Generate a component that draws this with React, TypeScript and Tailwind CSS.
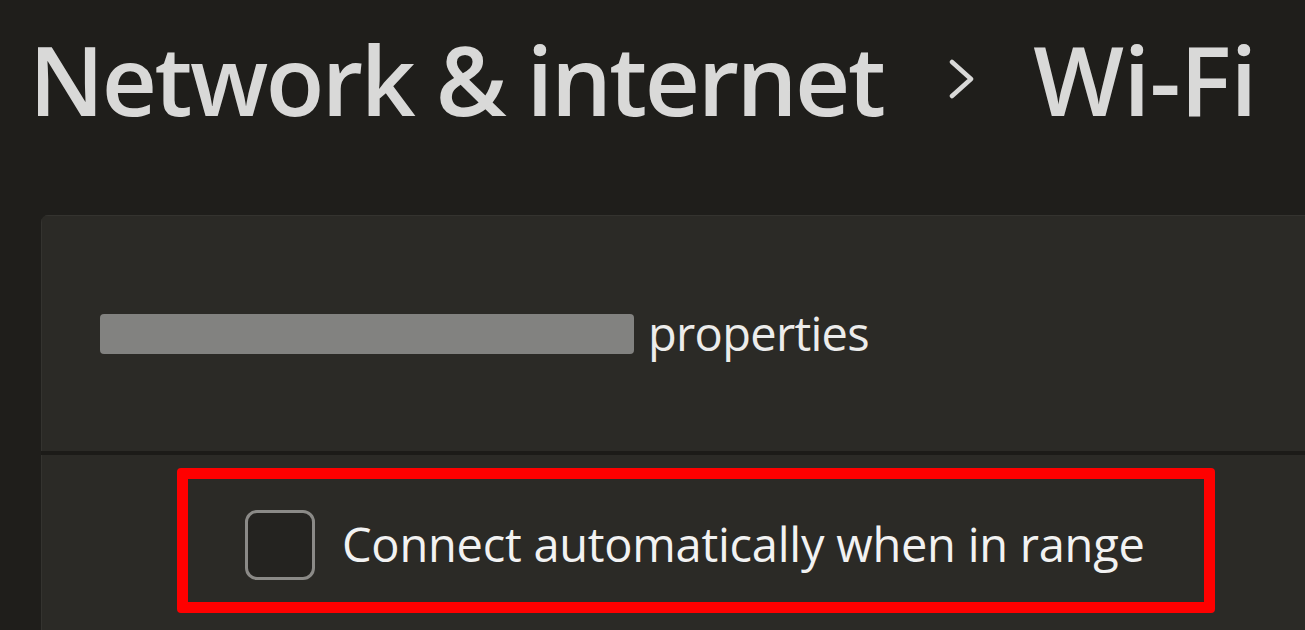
export default function App() {
  return (
    <div
      className="w-[1305px] h-[630px] overflow-hidden bg-[#1f1e1b] flex flex-col"
      style={{ fontFamily: '"Open Sans", "Noto Sans", sans-serif' }}
    >
      {/* breadcrumb header */}
      <div className="flex items-center mt-[31px] pl-[29px] text-[#d9d9d8] font-semibold text-[96px] leading-none tracking-[-2.5px] whitespace-nowrap">
        <span className="shrink-0">Network &amp; internet</span>
        <svg
          className="shrink-0 ml-[66px] mr-[58px]"
          width="26"
          height="40"
          viewBox="0 0 26 40"
          fill="none"
        >
          <polyline
            points="3,3 22,20 3,37"
            stroke="#d9d9d8"
            strokeWidth="4.5"
            strokeLinecap="round"
            strokeLinejoin="round"
          />
        </svg>
        <span className="shrink-0 tracking-[-0.6px]">Wi-Fi</span>
      </div>

      {/* settings card */}
      <div className="ml-[41px] mt-[88px] flex flex-col flex-1 rounded-tl-[7px] overflow-hidden">
        <div className="h-[236px] flex items-center pl-[58px] bg-[#2b2a26] border-t border-l border-[#34332f]">
          <div className="shrink-0 w-[534px] h-[40px] rounded-[4px] bg-[#828280]" />
          <span className="ml-[14px] text-[47px] leading-none tracking-[-0.7px] text-[#ececeb] whitespace-nowrap">
            properties
          </span>
        </div>
        <div className="h-[4px] bg-[#1c1b18]" />
        <div className="flex-1 bg-[#2b2a26] pt-[13px] pl-[135px] border-l border-[#34332f]">
          <div className="w-[1038px] h-[145px] border-[11px] border-[#ff0000] rounded-[4px] flex items-center pl-[57px] pt-[8px]">
            <div className="shrink-0 w-[70px] h-[70px] rounded-[12px] border-[3px] border-[#8b8a87] bg-[#242320]" />
            <span className="ml-[27px] text-[47px] leading-none tracking-[-0.25px] text-[#f2f2f2] whitespace-nowrap">
              Connect automatically when in range
            </span>
          </div>
        </div>
      </div>
    </div>
  );
}
